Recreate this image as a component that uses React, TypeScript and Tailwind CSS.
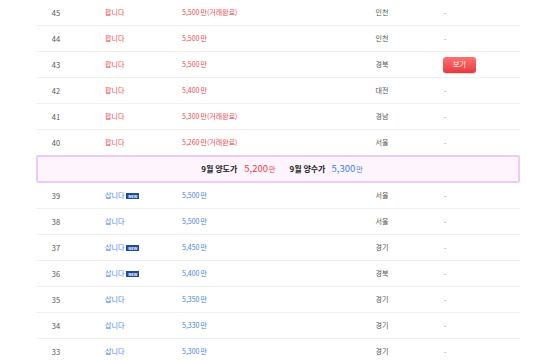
import React from "react";

type Row = {
  no: number;
  sell: boolean;
  isNew?: boolean;
  price: string;
  done?: boolean;
  region: string;
  btn?: boolean;
};

const before: Row[] = [
  { no: 45, sell: true, price: "5,500", done: true, region: "인천" },
  { no: 44, sell: true, price: "5,500", region: "인천" },
  { no: 43, sell: true, price: "5,500", region: "경북", btn: true },
  { no: 42, sell: true, price: "5,400", region: "대전" },
  { no: 41, sell: true, price: "5,300", done: true, region: "경남" },
  { no: 40, sell: true, price: "5,260", done: true, region: "서울" },
];

const after: Row[] = [
  { no: 39, sell: false, isNew: true, price: "5,500", region: "서울" },
  { no: 38, sell: false, price: "5,500", region: "서울" },
  { no: 37, sell: false, isNew: true, price: "5,450", region: "경기" },
  { no: 36, sell: false, isNew: true, price: "5,400", region: "경북" },
  { no: 35, sell: false, price: "5,350", region: "경기" },
  { no: 34, sell: false, price: "5,330", region: "경기" },
  { no: 33, sell: false, price: "5,300", region: "경기" },
];

function TableRow({ r }: { r: Row }) {
  const color = r.sell ? "text-[#ee4a52]" : "text-[#4a82e2]";
  return (
    <div className="flex h-[26px] items-center border-b border-[#f1f1f1] text-[7px] leading-none">
      <div className="w-[40px] text-center text-[7.5px] text-[#555]">{r.no}</div>
      <div className={`w-[106px] pl-[29px] flex items-center ${color}`}>
        <span>{r.sell ? "팝니다" : "삽니다"}</span>
        {r.isNew && (
          <span className="ml-[2px] inline-flex h-[6px] w-[13px] items-center justify-center bg-[#1d4c9e] text-[4px] font-bold leading-none text-white">
            NEW
          </span>
        )}
      </div>
      <div className={`w-[170px] ${color}`}>
        <span>{r.price}</span>
        <span className="ml-[1px]">만{r.done ? "(거래완료)" : ""}</span>
      </div>
      <div className="w-[60px] text-center text-[#555]">{r.region}</div>
      <div className="flex-1 pl-[31px] text-[#888]">
        {r.btn ? (
          <div className="flex h-[16px] w-[33px] items-center justify-center rounded-[3px] bg-gradient-to-b from-[#ff7272] to-[#e8373d] text-[7px] text-white shadow-[0_1px_1px_rgba(0,0,0,0.15)]">
            보기
          </div>
        ) : (
          <span className="pl-[1px]">-</span>
        )}
      </div>
    </div>
  );
}

export default function App() {
  return (
    <div
      className="h-[360px] w-[533px] overflow-hidden bg-white"
      style={{ fontFamily: '"Noto Sans CJK KR", "Noto Sans", sans-serif' }}
    >
      <div className="ml-[36px] w-[484px]">
        {before.map((r) => (
          <TableRow key={r.no} r={r} />
        ))}
        <div className="-mt-px flex h-[28px] items-center justify-center rounded-[2px] border-2 border-[#edcbf8] bg-[#fdf4fe] pl-[8px] leading-none">
          <span className="text-[8px] font-bold text-[#222]">9월 양도가</span>
          <span className="ml-[7px] text-[9.5px] text-[#ee3f48]">5,200</span>
          <span className="ml-[1px] text-[7px] text-[#ee3f48]">만</span>
          <span className="ml-[14px] text-[8px] font-bold text-[#222]">9월 양수가</span>
          <span className="ml-[6px] text-[9.5px] text-[#3f7de3]">5,300</span>
          <span className="ml-[1px] text-[7px] text-[#3f7de3]">만</span>
        </div>
        {after.map((r) => (
          <TableRow key={r.no} r={r} />
        ))}
      </div>
    </div>
  );
}
